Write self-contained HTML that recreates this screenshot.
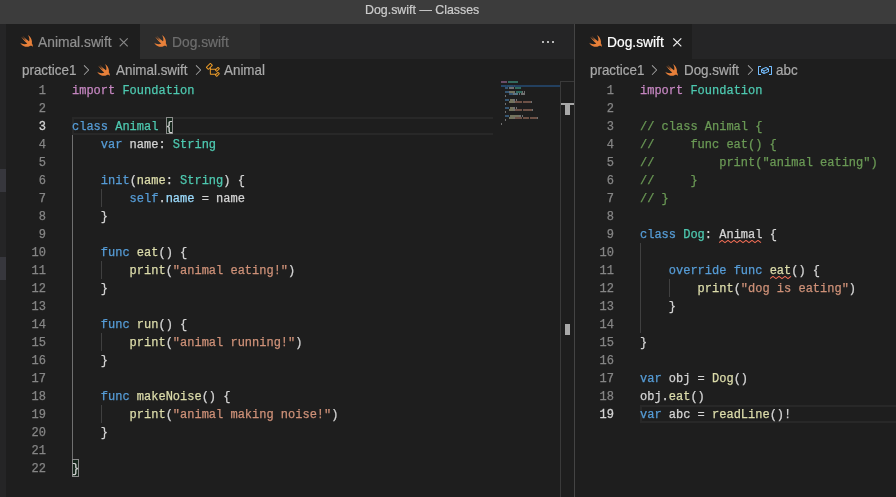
<!DOCTYPE html>
<html><head><meta charset="utf-8">
<style>
*{margin:0;padding:0;box-sizing:border-box}
html,body{width:896px;height:497px;overflow:hidden;background:#1e1e1e;font-family:"Liberation Sans",sans-serif}
.abs{position:absolute}
#title{position:absolute;left:0;top:0;width:896px;height:24px;background:#3c3c3c}
#title span{position:absolute;left:365px;top:3px;-webkit-text-stroke:0.2px currentColor;font-size:12.4px;color:#cccccc;white-space:nowrap}
.tabbar{position:absolute;top:24px;height:35px;background:#252526}
.tab{position:absolute;top:0;height:35px}
.tab .lbl{position:absolute;top:11px;font-size:13.8px;white-space:nowrap;-webkit-text-stroke:0.2px currentColor}
.swift{position:absolute}
.crumb{position:absolute;top:62px;font-size:13.4px;color:#a9a9a9;white-space:nowrap;-webkit-text-stroke:0.2px currentColor;transform:scaleY(1.06);transform-origin:0 0}
.ln{position:absolute;width:40px;text-align:right;font-family:"Liberation Mono",monospace;font-size:12px;line-height:18px;color:#858585;height:18px;-webkit-text-stroke:0.25px currentColor}
.ln.cur{color:#d4d4d4;-webkit-text-stroke:0.3px currentColor}
.code{position:absolute;font-family:"Liberation Mono",monospace;font-size:12px;line-height:18px;color:#d4d4d4;white-space:pre;height:18px;-webkit-text-stroke:0.25px currentColor}
.brbox{position:absolute;width:7px;height:18px;border:1px solid #8a8a8a;background:#14251a}
.sq{}
.guide{position:absolute;width:1px;background:#404040}
.curbox{position:absolute;border:2px solid #282828;height:18px}
</style></head><body><div id="root" style="position:absolute;left:0;top:0;width:896px;height:497px;will-change:transform">
<div id="title"><span>Dog.swift — Classes</span></div>
<!-- left strip -->
<div class="abs" style="left:0;top:24px;width:6px;height:473px;background:#252526"></div>
<div class="abs" style="left:0;top:169px;width:6px;height:23px;background:#37373d"></div>
<div class="abs" style="left:0;top:257px;width:6px;height:23px;background:#37373d"></div>
<!-- left group tabbar -->
<div class="tabbar" style="left:6px;width:568px"></div>
<div class="tab" style="left:6px;top:24px;width:134px;background:#1e1e1e">
  <div class="swift" style="left:14px;top:11px"><svg class="swift" width="12.8" height="11.8" viewBox="2.4 3.4 18.1 16.1" preserveAspectRatio="none"><path d="M13.543 3.41c4.114 2.47 6.545 7.162 5.549 11.131-.024.093-.05.181-.076.272l.002.001c2.062 2.538 1.5 5.258 1.236 4.745-1.072-2.086-3.066-1.568-4.088-1.043a6.803 6.803 0 0 1-.281.158l-.02.012-.002.002c-2.115 1.123-4.957 1.205-7.812-.022a12.568 12.568 0 0 1-5.64-4.838c.649.48 1.35.902 2.097 1.252 3.019 1.414 6.051 1.311 8.197-.002C9.651 12.73 7.101 9.670 5.146 7.191a10.628 10.628 0 0 1-1.005-1.384c2.34 2.142 6.038 4.83 7.365 5.576C8.690 8.408 6.208 4.743 6.324 4.86c4.436 4.47 8.528 6.996 8.528 6.996.154.085.27.154.36.213.085-.215.16-.437.224-.668.708-2.588-.09-5.548-1.893-7.992z" fill="#e8803a"/></svg></div>
  <div class="lbl" style="left:32px;color:#8f8f8f">Animal.swift</div>
  <svg class="abs" style="left:113px;top:14px" width="10" height="9" viewBox="0 0 10 9"><path d="M0.7 0.4 L8.7 8.3 M8.7 0.4 L0.7 8.3" stroke="#8a8a8a" stroke-width="1.1"/></svg>
</div>
<div class="tab" style="left:140px;top:24px;width:120px;background:#2d2d2d">
  <div class="swift" style="left:14px;top:11px"><svg class="swift" width="12.8" height="11.8" viewBox="2.4 3.4 18.1 16.1" preserveAspectRatio="none"><path d="M13.543 3.41c4.114 2.47 6.545 7.162 5.549 11.131-.024.093-.05.181-.076.272l.002.001c2.062 2.538 1.5 5.258 1.236 4.745-1.072-2.086-3.066-1.568-4.088-1.043a6.803 6.803 0 0 1-.281.158l-.02.012-.002.002c-2.115 1.123-4.957 1.205-7.812-.022a12.568 12.568 0 0 1-5.64-4.838c.649.48 1.35.902 2.097 1.252 3.019 1.414 6.051 1.311 8.197-.002C9.651 12.73 7.101 9.670 5.146 7.191a10.628 10.628 0 0 1-1.005-1.384c2.34 2.142 6.038 4.83 7.365 5.576C8.690 8.408 6.208 4.743 6.324 4.86c4.436 4.47 8.528 6.996 8.528 6.996.154.085.27.154.36.213.085-.215.16-.437.224-.668.708-2.588-.09-5.548-1.893-7.992z" fill="#e8803a"/></svg></div>
  <div class="lbl" style="left:32px;color:#6e6e6e">Dog.swift</div>
</div>
<div class="abs" style="left:542px;top:41px;width:2px;height:2px;background:#b8b8b8"></div><div class="abs" style="left:547px;top:41px;width:2px;height:2px;background:#b8b8b8"></div><div class="abs" style="left:552px;top:41px;width:2px;height:2px;background:#b8b8b8"></div>
<!-- divider -->
<div class="abs" style="left:574px;top:24px;width:1px;height:473px;background:#444444"></div>
<!-- right tabbar -->
<div class="tabbar" style="left:575px;width:321px"></div>
<div class="tab" style="left:575px;top:24px;width:117px;background:#1e1e1e">
  <div class="swift" style="left:14px;top:11px"><svg class="swift" width="12.8" height="11.8" viewBox="2.4 3.4 18.1 16.1" preserveAspectRatio="none"><path d="M13.543 3.41c4.114 2.47 6.545 7.162 5.549 11.131-.024.093-.05.181-.076.272l.002.001c2.062 2.538 1.5 5.258 1.236 4.745-1.072-2.086-3.066-1.568-4.088-1.043a6.803 6.803 0 0 1-.281.158l-.02.012-.002.002c-2.115 1.123-4.957 1.205-7.812-.022a12.568 12.568 0 0 1-5.64-4.838c.649.48 1.35.902 2.097 1.252 3.019 1.414 6.051 1.311 8.197-.002C9.651 12.73 7.101 9.670 5.146 7.191a10.628 10.628 0 0 1-1.005-1.384c2.34 2.142 6.038 4.83 7.365 5.576C8.690 8.408 6.208 4.743 6.324 4.86c4.436 4.47 8.528 6.996 8.528 6.996.154.085.27.154.36.213.085-.215.16-.437.224-.668.708-2.588-.09-5.548-1.893-7.992z" fill="#e8803a"/></svg></div>
  <div class="lbl" style="left:32px;color:#ffffff">Dog.swift</div>
  <svg class="abs" style="left:98px;top:14px" width="10" height="9" viewBox="0 0 10 9"><path d="M0.3 0.4 L8.3 8.3 M8.3 0.4 L0.3 8.3" stroke="#f0f0f0" stroke-width="1.1"/></svg>
</div>
<!-- breadcrumbs left -->
<div class="crumb" style="left:22px">practice1</div>
<div class="crumb" style="left:116px">Animal.swift</div>
<div class="crumb" style="left:224px">Animal</div>
<!-- breadcrumbs right -->
<div class="crumb" style="left:590px">practice1</div>
<div class="crumb" style="left:684px">Dog.swift</div>
<div class="crumb" style="left:776px">abc</div>
<svg class="abs" style="left:78px;top:62px" width="16" height="16" viewBox="0 0 16 16"><path d="M10.072 8.024L5.715 3.667l.618-.62L11 7.716v.618L6.333 13l-.618-.619 4.357-4.357z" fill="#a9a9a9"/></svg><svg class="abs" style="left:190px;top:62px" width="16" height="16" viewBox="0 0 16 16"><path d="M10.072 8.024L5.715 3.667l.618-.62L11 7.716v.618L6.333 13l-.618-.619 4.357-4.357z" fill="#a9a9a9"/></svg><svg class="abs" style="left:646px;top:62px" width="16" height="16" viewBox="0 0 16 16"><path d="M10.072 8.024L5.715 3.667l.618-.62L11 7.716v.618L6.333 13l-.618-.619 4.357-4.357z" fill="#a9a9a9"/></svg><svg class="abs" style="left:742px;top:62px" width="16" height="16" viewBox="0 0 16 16"><path d="M10.072 8.024L5.715 3.667l.618-.62L11 7.716v.618L6.333 13l-.618-.619 4.357-4.357z" fill="#a9a9a9"/></svg><svg class="abs" style="left:205px;top:62px" width="16" height="16" viewBox="0 0 16 16"><path d="M11.34 9.71h.71l2.67-2.67v-.71L13.38 5h-.7l-1.82 1.81h-5V5.56l1.86-1.85V3l-2-2H5L1 5v.71l2 2h.71l1.14-1.15v5.79l.5.5H10v.52l1.33 1.34h.71l2.67-2.67v-.71L13.37 10h-.7l-1.86 1.85h-5v-4H10v.48l1.34 1.38zm1.69-3.65l.63.63-2 2-.63-.63 2-2zm0 5l.63.63-2 2-.63-.63 2-2zM3.35 6.65l-1.29-1.3 3.29-3.29 1.3 1.29-3.3 3.3z" fill="#ee9d28"/></svg><svg class="abs" style="left:757px;top:62px" width="16" height="16" viewBox="0 0 16 16"><path d="M2 5h2V4H1.5l-.5.5v8l.5.5H4v-1H2V5zm12.5-1H12v1h2v7h-2v1h2.5l.5-.5v-8l-.5-.5zm-2.74 2.57L12 7v2.51l-.3.45-4.5 2h-.46l-2.5-1.5-.24-.43v-2.5l.3-.46 4.5-2h.46l2.5 1.5zM5 9.71l1.5.9V9.28L5 8.38v1.33zm.58-2.15l1.45.87 3.39-1.5-1.45-.87-3.39 1.5zm1.95 3.17l3.5-1.56v-1.4l-3.5 1.55v1.41z" fill="#75beff"/></svg><div class="swift" style="left:97px;top:64px"><svg class="swift" width="12.8" height="11.8" viewBox="2.4 3.4 18.1 16.1" preserveAspectRatio="none"><path d="M13.543 3.41c4.114 2.47 6.545 7.162 5.549 11.131-.024.093-.05.181-.076.272l.002.001c2.062 2.538 1.5 5.258 1.236 4.745-1.072-2.086-3.066-1.568-4.088-1.043a6.803 6.803 0 0 1-.281.158l-.02.012-.002.002c-2.115 1.123-4.957 1.205-7.812-.022a12.568 12.568 0 0 1-5.64-4.838c.649.48 1.35.902 2.097 1.252 3.019 1.414 6.051 1.311 8.197-.002C9.651 12.73 7.101 9.670 5.146 7.191a10.628 10.628 0 0 1-1.005-1.384c2.34 2.142 6.038 4.83 7.365 5.576C8.690 8.408 6.208 4.743 6.324 4.86c4.436 4.47 8.528 6.996 8.528 6.996.154.085.27.154.36.213.085-.215.16-.437.224-.668.708-2.588-.09-5.548-1.893-7.992z" fill="#e8803a"/></svg></div><div class="swift" style="left:665px;top:64px"><svg class="swift" width="12.8" height="11.8" viewBox="2.4 3.4 18.1 16.1" preserveAspectRatio="none"><path d="M13.543 3.41c4.114 2.47 6.545 7.162 5.549 11.131-.024.093-.05.181-.076.272l.002.001c2.062 2.538 1.5 5.258 1.236 4.745-1.072-2.086-3.066-1.568-4.088-1.043a6.803 6.803 0 0 1-.281.158l-.02.012-.002.002c-2.115 1.123-4.957 1.205-7.812-.022a12.568 12.568 0 0 1-5.64-4.838c.649.48 1.35.902 2.097 1.252 3.019 1.414 6.051 1.311 8.197-.002C9.651 12.73 7.101 9.670 5.146 7.191a10.628 10.628 0 0 1-1.005-1.384c2.34 2.142 6.038 4.83 7.365 5.576C8.690 8.408 6.208 4.743 6.324 4.86c4.436 4.47 8.528 6.996 8.528 6.996.154.085.27.154.36.213.085-.215.16-.437.224-.668.708-2.588-.09-5.548-1.893-7.992z" fill="#e8803a"/></svg></div>
<svg class="abs" style="left:719px;top:240px" width="46" height="4"><polyline points="0.0,2.6 3.0,0.4 6.0,2.6 9.0,0.4 12.0,2.6 15.0,0.4 18.0,2.6 21.0,0.4 24.0,2.6 27.0,0.4 30.0,2.6 33.0,0.4 36.0,2.6 39.0,0.4 42.0,2.6" fill="none" stroke="#ee6d55" stroke-width="1.1"/></svg><svg class="abs" style="left:770px;top:276px" width="24" height="4"><polyline points="0.0,2.6 3.0,0.4 6.0,2.6 9.0,0.4 12.0,2.6 15.0,0.4 18.0,2.6 21.0,0.4" fill="none" stroke="#ee6d55" stroke-width="1.1"/></svg>
<!-- current line boxes -->
<div class="curbox" style="left:72px;top:117px;width:421px;height:18px;border-right:none"></div>
<div class="curbox" style="left:640px;top:405px;width:260px;height:18px"></div>
<!-- guides -->
<div class="guide" style="left:72px;top:135px;height:324px;background:#707070"></div>
<div class="brbox" style="left:166px;top:117px;height:17px"></div>
<div class="brbox" style="left:72px;top:459px"></div>
<div class="guide" style="left:101px;top:189px;height:18px"></div>
<div class="guide" style="left:101px;top:261px;height:18px"></div>
<div class="guide" style="left:101px;top:333px;height:18px"></div>
<div class="guide" style="left:101px;top:405px;height:18px"></div>
<div class="guide" style="left:640px;top:243px;height:90px"></div>
<div class="guide" style="left:669px;top:279px;height:18px"></div>
<div class="ln" style="top:82px;left:6px">1</div><div class="code" style="top:82px;left:72px"><span style="color:#c586c0">import</span> <span style="color:#4ec9b0">Foundation</span></div>
<div class="ln" style="top:100px;left:6px">2</div><div class="code" style="top:100px;left:72px"></div>
<div class="ln cur" style="top:118px;left:6px">3</div><div class="code" style="top:118px;left:72px"><span style="color:#569cd6">class</span> <span style="color:#4ec9b0">Animal</span> {</div>
<div class="ln" style="top:136px;left:6px">4</div><div class="code" style="top:136px;left:72px">    <span style="color:#569cd6">var</span> name: <span style="color:#4ec9b0">String</span></div>
<div class="ln" style="top:154px;left:6px">5</div><div class="code" style="top:154px;left:72px"></div>
<div class="ln" style="top:172px;left:6px">6</div><div class="code" style="top:172px;left:72px">    <span style="color:#569cd6">init</span>(<span style="color:#dcdcaa">name</span>: <span style="color:#4ec9b0">String</span>) {</div>
<div class="ln" style="top:190px;left:6px">7</div><div class="code" style="top:190px;left:72px">        <span style="color:#569cd6">self</span>.<span style="color:#9cdcfe">name</span> = name</div>
<div class="ln" style="top:208px;left:6px">8</div><div class="code" style="top:208px;left:72px">    }</div>
<div class="ln" style="top:226px;left:6px">9</div><div class="code" style="top:226px;left:72px"></div>
<div class="ln" style="top:244px;left:6px">10</div><div class="code" style="top:244px;left:72px">    <span style="color:#569cd6">func</span> <span style="color:#dcdcaa">eat</span>() {</div>
<div class="ln" style="top:262px;left:6px">11</div><div class="code" style="top:262px;left:72px">        <span style="color:#dcdcaa">print</span>(<span style="color:#ce9178">&quot;animal eating!&quot;</span>)</div>
<div class="ln" style="top:280px;left:6px">12</div><div class="code" style="top:280px;left:72px">    }</div>
<div class="ln" style="top:298px;left:6px">13</div><div class="code" style="top:298px;left:72px"></div>
<div class="ln" style="top:316px;left:6px">14</div><div class="code" style="top:316px;left:72px">    <span style="color:#569cd6">func</span> <span style="color:#dcdcaa">run</span>() {</div>
<div class="ln" style="top:334px;left:6px">15</div><div class="code" style="top:334px;left:72px">        <span style="color:#dcdcaa">print</span>(<span style="color:#ce9178">&quot;animal running!&quot;</span>)</div>
<div class="ln" style="top:352px;left:6px">16</div><div class="code" style="top:352px;left:72px">    }</div>
<div class="ln" style="top:370px;left:6px">17</div><div class="code" style="top:370px;left:72px"></div>
<div class="ln" style="top:388px;left:6px">18</div><div class="code" style="top:388px;left:72px">    <span style="color:#569cd6">func</span> <span style="color:#dcdcaa">makeNoise</span>() {</div>
<div class="ln" style="top:406px;left:6px">19</div><div class="code" style="top:406px;left:72px">        <span style="color:#dcdcaa">print</span>(<span style="color:#ce9178">&quot;animal making noise!&quot;</span>)</div>
<div class="ln" style="top:424px;left:6px">20</div><div class="code" style="top:424px;left:72px">    }</div>
<div class="ln" style="top:442px;left:6px">21</div><div class="code" style="top:442px;left:72px"></div>
<div class="ln" style="top:460px;left:6px">22</div><div class="code" style="top:460px;left:72px">}</div>

<div class="ln" style="top:82px;left:574px">1</div><div class="code" style="top:82px;left:640px"><span style="color:#c586c0">import</span> <span style="color:#4ec9b0">Foundation</span></div>
<div class="ln" style="top:100px;left:574px">2</div><div class="code" style="top:100px;left:640px"></div>
<div class="ln" style="top:118px;left:574px">3</div><div class="code" style="top:118px;left:640px"><span style="color:#6a9955">// class Animal {</span></div>
<div class="ln" style="top:136px;left:574px">4</div><div class="code" style="top:136px;left:640px"><span style="color:#6a9955">//     func eat() {</span></div>
<div class="ln" style="top:154px;left:574px">5</div><div class="code" style="top:154px;left:640px"><span style="color:#6a9955">//         print(&quot;animal eating&quot;)</span></div>
<div class="ln" style="top:172px;left:574px">6</div><div class="code" style="top:172px;left:640px"><span style="color:#6a9955">//     }</span></div>
<div class="ln" style="top:190px;left:574px">7</div><div class="code" style="top:190px;left:640px"><span style="color:#6a9955">// }</span></div>
<div class="ln" style="top:208px;left:574px">8</div><div class="code" style="top:208px;left:640px"></div>
<div class="ln" style="top:226px;left:574px">9</div><div class="code" style="top:226px;left:640px"><span style="color:#569cd6">class</span> <span style="color:#4ec9b0">Dog</span>: <span class="sq">Animal</span> {</div>
<div class="ln" style="top:244px;left:574px">10</div><div class="code" style="top:244px;left:640px"></div>
<div class="ln" style="top:262px;left:574px">11</div><div class="code" style="top:262px;left:640px">    <span style="color:#569cd6">override</span> <span style="color:#569cd6">func</span> <span class="sq" style="color:#dcdcaa">eat</span>() {</div>
<div class="ln" style="top:280px;left:574px">12</div><div class="code" style="top:280px;left:640px">        <span style="color:#dcdcaa">print</span>(<span style="color:#ce9178">&quot;dog is eating&quot;</span>)</div>
<div class="ln" style="top:298px;left:574px">13</div><div class="code" style="top:298px;left:640px">    }</div>
<div class="ln" style="top:316px;left:574px">14</div><div class="code" style="top:316px;left:640px"></div>
<div class="ln" style="top:334px;left:574px">15</div><div class="code" style="top:334px;left:640px">}</div>
<div class="ln" style="top:352px;left:574px">16</div><div class="code" style="top:352px;left:640px"></div>
<div class="ln" style="top:370px;left:574px">17</div><div class="code" style="top:370px;left:640px"><span style="color:#569cd6">var</span> obj = <span style="color:#dcdcaa">Dog</span>()</div>
<div class="ln" style="top:388px;left:574px">18</div><div class="code" style="top:388px;left:640px">obj.<span style="color:#dcdcaa">eat</span>()</div>
<div class="ln cur" style="top:406px;left:574px">19</div><div class="code" style="top:406px;left:640px"><span style="color:#569cd6">var</span> abc = <span style="color:#dcdcaa">readLine</span>()!</div>

<!-- minimap / ruler -->
<div class="abs" style="left:560px;top:81px;width:1px;height:416px;background:#3a3a3a"></div>
<div class="abs" style="left:561px;top:81px;width:13px;height:1px;background:#3a3a3a"></div>
<div class="abs" style="left:561px;top:103px;width:13px;height:2px;background:#a8a8a8"></div>
<div class="abs" style="left:565px;top:105px;width:5px;height:10px;background:#a8a8a8"></div>
<div class="abs" style="left:565px;top:324px;width:5px;height:11px;background:#a8a8a8"></div>

<div class="abs" style="left:501px;top:81px;width:6px;height:1.5px;background:#c586c0;opacity:.45"></div><div class="abs" style="left:508px;top:81px;width:10px;height:1.5px;background:#4ec9b0;opacity:.45"></div><div class="abs" style="left:501px;top:85px;width:5px;height:1.5px;background:#569cd6;opacity:.45"></div><div class="abs" style="left:507px;top:85px;width:6px;height:1.5px;background:#4ec9b0;opacity:.45"></div><div class="abs" style="left:514px;top:85px;width:1px;height:1.5px;background:#d4d4d4;opacity:.45"></div><div class="abs" style="left:505px;top:87px;width:3px;height:1.5px;background:#569cd6;opacity:.45"></div><div class="abs" style="left:509px;top:87px;width:5px;height:1.5px;background:#d4d4d4;opacity:.45"></div><div class="abs" style="left:515px;top:87px;width:6px;height:1.5px;background:#4ec9b0;opacity:.45"></div><div class="abs" style="left:505px;top:91px;width:4px;height:1.5px;background:#569cd6;opacity:.45"></div><div class="abs" style="left:509px;top:91px;width:1px;height:1.5px;background:#d4d4d4;opacity:.45"></div><div class="abs" style="left:510px;top:91px;width:4px;height:1.5px;background:#dcdcaa;opacity:.45"></div><div class="abs" style="left:514px;top:91px;width:1px;height:1.5px;background:#d4d4d4;opacity:.45"></div><div class="abs" style="left:516px;top:91px;width:6px;height:1.5px;background:#4ec9b0;opacity:.45"></div><div class="abs" style="left:522px;top:91px;width:1px;height:1.5px;background:#d4d4d4;opacity:.45"></div><div class="abs" style="left:524px;top:91px;width:1px;height:1.5px;background:#d4d4d4;opacity:.45"></div><div class="abs" style="left:509px;top:93px;width:4px;height:1.5px;background:#569cd6;opacity:.45"></div><div class="abs" style="left:513px;top:93px;width:1px;height:1.5px;background:#d4d4d4;opacity:.45"></div><div class="abs" style="left:514px;top:93px;width:4px;height:1.5px;background:#9cdcfe;opacity:.45"></div><div class="abs" style="left:519px;top:93px;width:1px;height:1.5px;background:#d4d4d4;opacity:.45"></div><div class="abs" style="left:521px;top:93px;width:4px;height:1.5px;background:#d4d4d4;opacity:.45"></div><div class="abs" style="left:505px;top:95px;width:1px;height:1.5px;background:#d4d4d4;opacity:.45"></div><div class="abs" style="left:505px;top:99px;width:4px;height:1.5px;background:#569cd6;opacity:.45"></div><div class="abs" style="left:510px;top:99px;width:3px;height:1.5px;background:#dcdcaa;opacity:.45"></div><div class="abs" style="left:513px;top:99px;width:2px;height:1.5px;background:#d4d4d4;opacity:.45"></div><div class="abs" style="left:516px;top:99px;width:1px;height:1.5px;background:#d4d4d4;opacity:.45"></div><div class="abs" style="left:509px;top:101px;width:5px;height:1.5px;background:#dcdcaa;opacity:.45"></div><div class="abs" style="left:514px;top:101px;width:1px;height:1.5px;background:#d4d4d4;opacity:.45"></div><div class="abs" style="left:515px;top:101px;width:7px;height:1.5px;background:#ce9178;opacity:.45"></div><div class="abs" style="left:523px;top:101px;width:8px;height:1.5px;background:#ce9178;opacity:.45"></div><div class="abs" style="left:531px;top:101px;width:1px;height:1.5px;background:#d4d4d4;opacity:.45"></div><div class="abs" style="left:505px;top:103px;width:1px;height:1.5px;background:#d4d4d4;opacity:.45"></div><div class="abs" style="left:505px;top:107px;width:4px;height:1.5px;background:#569cd6;opacity:.45"></div><div class="abs" style="left:510px;top:107px;width:3px;height:1.5px;background:#dcdcaa;opacity:.45"></div><div class="abs" style="left:513px;top:107px;width:2px;height:1.5px;background:#d4d4d4;opacity:.45"></div><div class="abs" style="left:516px;top:107px;width:1px;height:1.5px;background:#d4d4d4;opacity:.45"></div><div class="abs" style="left:509px;top:109px;width:5px;height:1.5px;background:#dcdcaa;opacity:.45"></div><div class="abs" style="left:514px;top:109px;width:1px;height:1.5px;background:#d4d4d4;opacity:.45"></div><div class="abs" style="left:515px;top:109px;width:7px;height:1.5px;background:#ce9178;opacity:.45"></div><div class="abs" style="left:523px;top:109px;width:9px;height:1.5px;background:#ce9178;opacity:.45"></div><div class="abs" style="left:532px;top:109px;width:1px;height:1.5px;background:#d4d4d4;opacity:.45"></div><div class="abs" style="left:505px;top:111px;width:1px;height:1.5px;background:#d4d4d4;opacity:.45"></div><div class="abs" style="left:505px;top:115px;width:4px;height:1.5px;background:#569cd6;opacity:.45"></div><div class="abs" style="left:510px;top:115px;width:9px;height:1.5px;background:#dcdcaa;opacity:.45"></div><div class="abs" style="left:519px;top:115px;width:2px;height:1.5px;background:#d4d4d4;opacity:.45"></div><div class="abs" style="left:522px;top:115px;width:1px;height:1.5px;background:#d4d4d4;opacity:.45"></div><div class="abs" style="left:509px;top:117px;width:5px;height:1.5px;background:#dcdcaa;opacity:.45"></div><div class="abs" style="left:514px;top:117px;width:1px;height:1.5px;background:#d4d4d4;opacity:.45"></div><div class="abs" style="left:515px;top:117px;width:7px;height:1.5px;background:#ce9178;opacity:.45"></div><div class="abs" style="left:523px;top:117px;width:6px;height:1.5px;background:#ce9178;opacity:.45"></div><div class="abs" style="left:530px;top:117px;width:7px;height:1.5px;background:#ce9178;opacity:.45"></div><div class="abs" style="left:537px;top:117px;width:1px;height:1.5px;background:#d4d4d4;opacity:.45"></div><div class="abs" style="left:505px;top:119px;width:1px;height:1.5px;background:#d4d4d4;opacity:.45"></div><div class="abs" style="left:501px;top:123px;width:1px;height:1.5px;background:#d4d4d4;opacity:.45"></div>
<div class="abs" style="left:501px;top:85px;width:59px;height:2px;background:#24476b;opacity:.85"></div>
</div></body></html>
